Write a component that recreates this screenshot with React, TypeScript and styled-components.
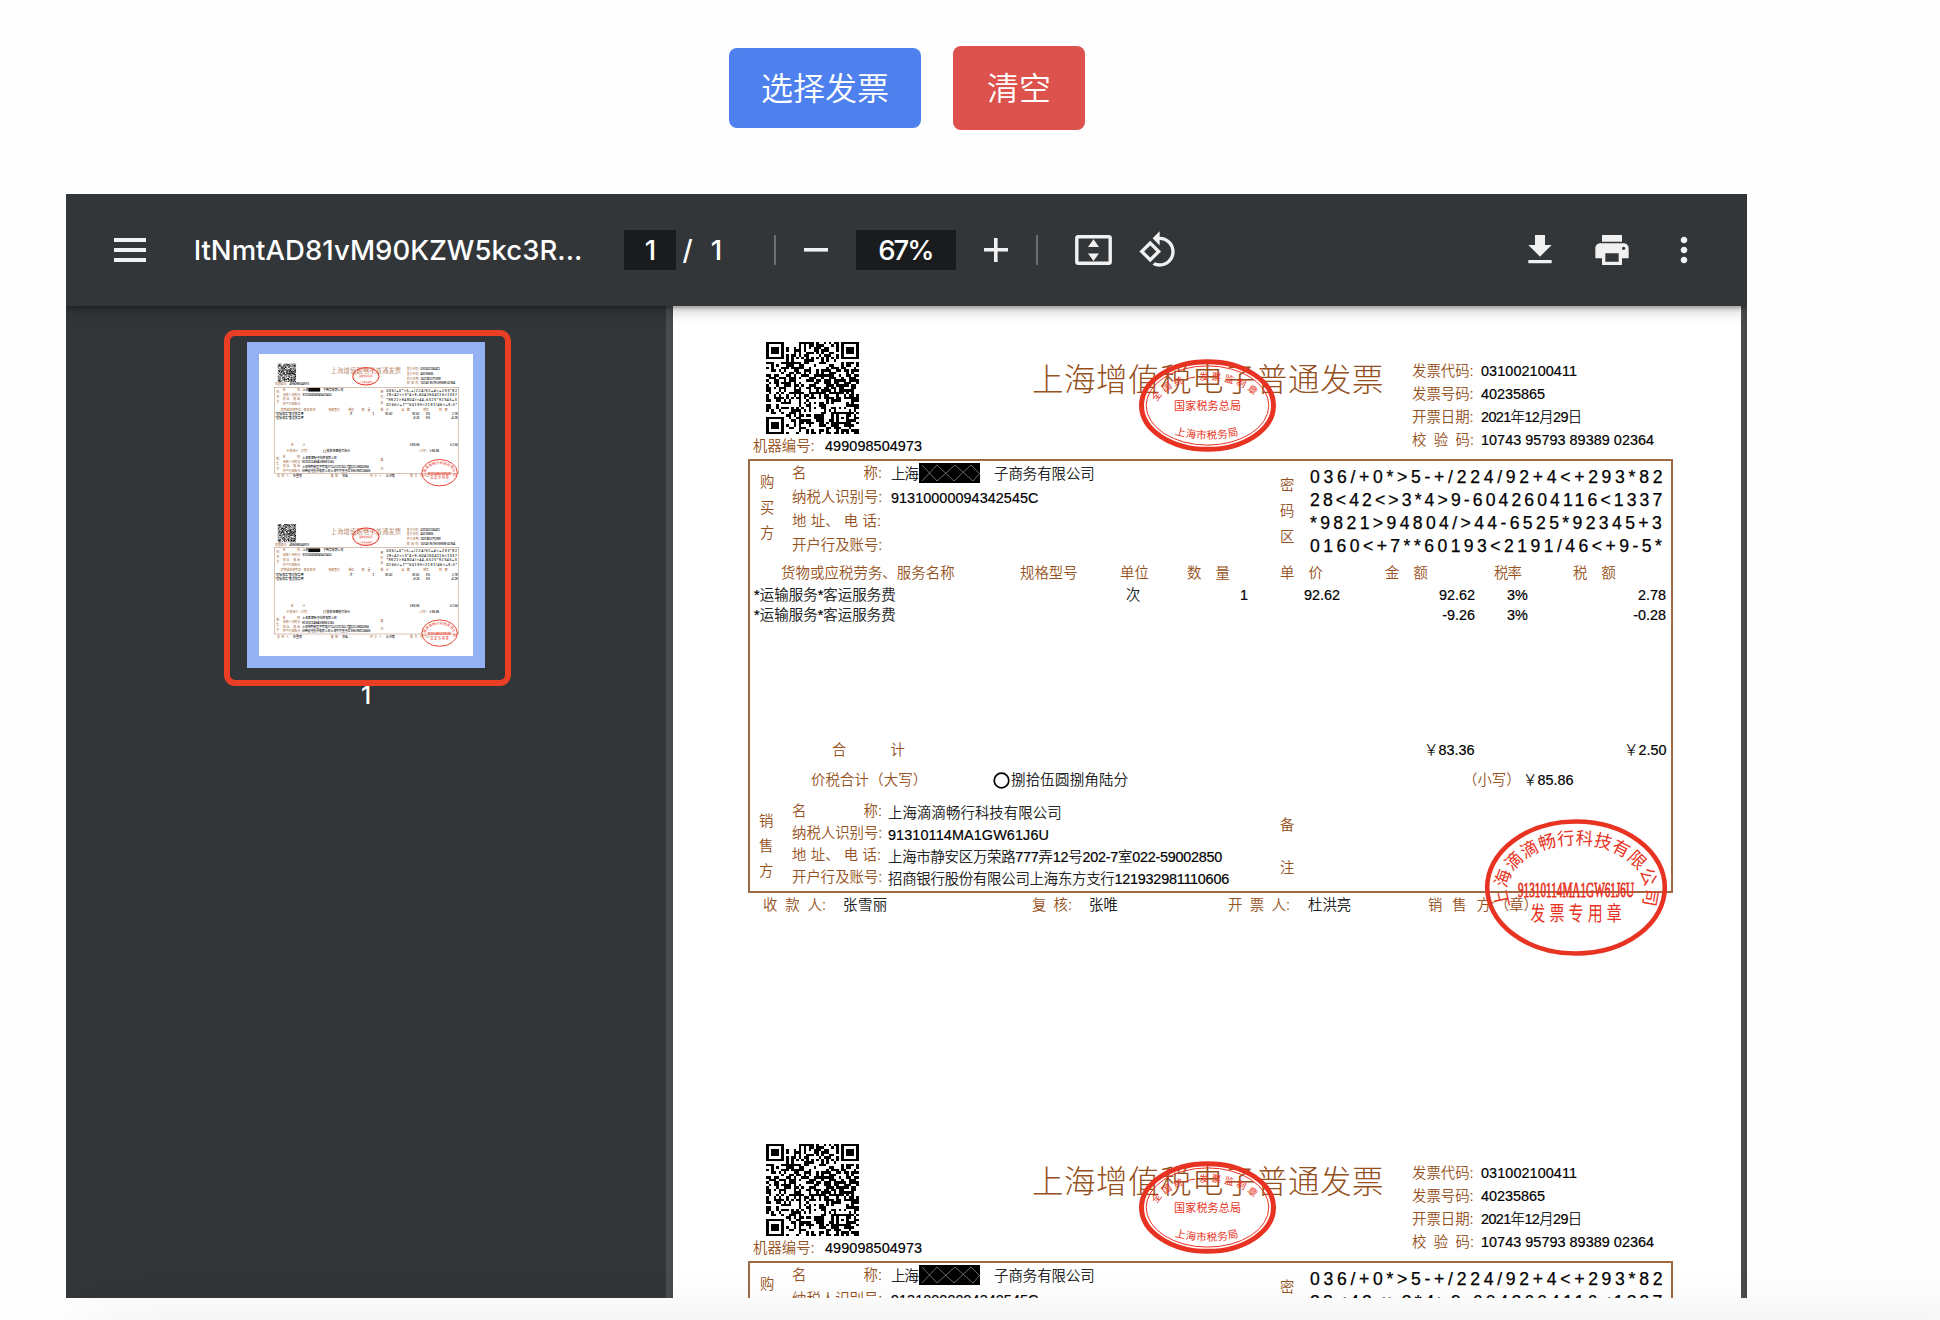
import React, { useLayoutEffect, useRef, useState } from 'react';
import styled, { createGlobalStyle } from 'styled-components';

const BROWN = '#955020';
const RED = '#e83323';

const GlobalStyle = createGlobalStyle`
  * { box-sizing: border-box; }
  html, body { margin: 0; background: #fefefe; overflow: hidden; }
  body {
    width: 1940px;
    height: 1320px;
    font-family: 'Liberation Sans', 'Noto Sans CJK SC', sans-serif;
  }
`;

/* ---------- page ---------- */

const Page = styled.div`
  position: relative;
  width: 1940px;
  height: 1320px;
  padding-left: 66px;
  overflow: hidden;
`;

const Actions = styled.div`
  display: flex;
  width: 1682px;
  height: 194px;
  padding-bottom: 18px;
  align-items: center;
  justify-content: center;
  gap: 32px;
`;

const Button = styled.button<{ $bg: string; $w: number; $h: number }>`
  width: ${(p) => p.$w}px;
  height: ${(p) => p.$h}px;
  padding: 0 0 5px;
  border: 0;
  border-radius: 8px;
  background: ${(p) => p.$bg};
  color: #fff;
  font: 350 32px/1 'Noto Sans CJK SC', sans-serif;
`;

const Viewer = styled.div`
  display: flex;
  flex-direction: column;
  width: 1681px;
  height: 1104px;
  overflow: hidden;
  background: #323639;
`;

const BottomGlow = styled.div`
  position: absolute;
  left: 90px;
  right: -60px;
  top: 1340px;
  height: 80px;
  box-shadow: 0 0 80px rgba(0, 0, 0, 0.11);
`;

/* ---------- toolbar ---------- */

const Toolbar = styled.div`
  position: relative;
  z-index: 2;
  display: flex;
  flex: 0 0 112px;
  align-items: center;
  padding-left: 48px;
  background: #323639;
  color: #fff;
  font: 500 27.5px/41px Inter, sans-serif;
  box-shadow: 0 2px 4px rgba(0, 0, 0, 0.3), 0 4px 12px rgba(0, 0, 0, 0.15),
    0 8px 16px rgba(0, 0, 0, 0.06);
`;

const Tool = styled.div<{ $ml: number; $w?: number }>`
  display: flex;
  flex: 0 0 ${(p) => (p.$w ? `${p.$w}px` : 'auto')};
  justify-content: center;
  margin-left: ${(p) => p.$ml}px;
`;

const Field = styled(Tool)`
  height: 40px;
  background: #1a1b1d;
`;

const Divider = styled.div<{ $ml: number }>`
  flex: 0 0 2px;
  height: 30px;
  margin-left: ${(p) => p.$ml}px;
  background: #6d7072;
`;

const Icon = styled.svg`
  display: block;
  fill: #f1f1f1;
`;

/* ---------- panes ---------- */

const Panes = styled.div`
  display: flex;
  flex: 1;
  min-height: 0;
`;

const Sidebar = styled.div`
  display: flex;
  flex: 0 0 600px;
  flex-direction: column;
  align-items: center;
  padding-top: 36px;
`;

const Splitter = styled.div<{ $w: number }>`
  flex: 0 0 ${(p) => p.$w}px;
  background: linear-gradient(90deg, #4c4f52, #45484b);
`;

const Thumb = styled.div`
  position: relative;
  width: 238px;
  height: 326px;
  border: 12px solid #93b1f3;
  background: #fff;
`;

const ThumbClip = styled.div`
  width: 214px;
  height: 302px;
  overflow: hidden;
`;

const ThumbScale = styled.div`
  width: 1068px;
  transform: scale(0.2);
  transform-origin: 0 0;
`;

const Marker = styled.div`
  position: absolute;
  left: -35px;
  top: -24px;
  width: 287px;
  height: 356px;
  border: 6px solid #ea3e25;
  border-radius: 11px;
`;

const ThumbLabel = styled.div`
  margin-top: 12px;
  color: #fff;
  font: 500 24.5px/30px Inter, sans-serif;
`;

const Document = styled.div`
  flex: 0 0 1068px;
  overflow: hidden;
  background: #fff;
`;

const Scrolled = styled.div`
  margin-top: -12px;
`;

/* ---------- invoice ---------- */

const Sheet = styled.div`
  position: relative;
  height: 802px;
  font-size: 14.4px;
  line-height: 20px;
  color: #000;
`;

const Head = styled.div`
  display: flex;
  height: 165px;
  padding-left: 80px;
`;

const QrColumn = styled.div`
  display: flex;
  flex-direction: column;
  flex: 0 0 279px;
  padding-top: 48px;
`;

const QrCode = styled.svg`
  display: block;
  width: 93px;
  height: 92px;
  margin-left: 13px;
  fill: #000;
`;

const Title = styled.div`
  flex: 0 0 380px;
  padding-top: 64px;
  color: ${BROWN};
  font: 300 31.5px/38px 'Noto Sans CJK SC', sans-serif;
`;

const Stack = styled.div<{ $w?: number; $pitch: number; $top: number }>`
  display: flex;
  flex-direction: column;
  flex: 0 0 ${(p) => (p.$w ? `${p.$w}px` : 'auto')};
  padding-top: ${(p) => p.$top}px;
  & > * {
    flex: none;
    height: ${(p) => p.$pitch}px;
    line-height: ${(p) => p.$pitch}px;
  }
`;

const Line = styled.div<{ $h?: number }>`
  display: flex;
  align-items: center;
  ${(p) => p.$h && `flex: none; height: ${p.$h}px; line-height: ${p.$h}px;`}
`;

const Frame = styled.div`
  display: flex;
  flex-direction: column;
  width: 925px;
  height: 434px;
  margin-left: 75px;
  border: 2px solid #a06a45;
`;

const Party = styled.div<{ $h: number }>`
  display: flex;
  flex: none;
  height: ${(p) => p.$h}px;
`;

const Spacer = styled.div<{ $h: number }>`
  flex: none;
  height: ${(p) => p.$h}px;
`;

const Cell = styled.div<{ $ml: number; $w: number; $brown?: boolean; $right?: boolean }>`
  display: flex;
  flex: none;
  width: ${(p) => p.$w}px;
  margin-left: ${(p) => p.$ml}px;
  justify-content: ${(p) => (p.$right ? 'flex-end' : 'space-between')};
  white-space: pre;
  color: ${(p) => (p.$brown ? BROWN : '#000')};
  font-weight: ${(p) => (p.$brown ? 350 : 300)};
  -webkit-text-stroke: ${(p) => (p.$brown ? '0' : '0.2px #000')};
`;

const Cipher = styled.div`
  font-size: 17.6px;
  -webkit-text-stroke: 0.25px #000;
`;

const Redaction = styled.svg`
  display: block;
  flex: 0 0 61px;
  height: 20px;
  margin: 0 14px 2px 0;
`;

const Seal = styled.svg<{ $x: number; $y: number }>`
  position: absolute;
  left: ${(p) => p.$x}px;
  top: ${(p) => p.$y}px;
  overflow: visible;
  fill: ${RED};
  font-family: 'Noto Sans CJK SC', sans-serif;
`;

const FitSpan = styled.span`
  display: inline-block;
  white-space: pre;
`;

/* Spreads the letters of a string so that it takes exactly the given width. */
function Fit({ w, children }: { w: number; children: string }) {
  const ref = useRef<HTMLSpanElement>(null);
  const [gap, setGap] = useState(0);
  useLayoutEffect(() => {
    const el = ref.current;
    if (!el) return;
    el.style.letterSpacing = '0px';
    setGap((w - el.offsetWidth) / Math.max(1, children.length - 1));
    el.style.letterSpacing = '';
  }, [w, children]);
  return (
    <FitSpan ref={ref} style={{ letterSpacing: `${gap}px`, marginRight: -gap }}>
      {children}
    </FitSpan>
  );
}

/* Brown form label; "|" marks the places where free space goes. */
function Label({ x = 0, w, children }: { x?: number; w: number; children: string }) {
  const parts = children.split('|');
  return (
    <Cell $ml={x} $w={w} $brown>
      {parts.length === 1 ? <Fit w={w}>{children}</Fit> : parts.map((p, i) => <span key={i}>{p}</span>)}
    </Cell>
  );
}

function Value({ x = 0, w, children }: { x?: number; w: number; children: string }) {
  return (
    <Cell $ml={x} $w={w}>
      <Fit w={w}>{children}</Fit>
    </Cell>
  );
}

const QR_SIZE = 37;

function finderBit(x: number, y: number) {
  const d = Math.max(Math.abs(x - 3), Math.abs(y - 3));
  return d === 3 || d <= 1;
}

function qrPath() {
  let seed = 40235865;
  let d = '';
  for (let y = 0; y < QR_SIZE; y++) {
    for (let x = 0; x < QR_SIZE; x++) {
      seed = (Math.imul(seed, 1103515245) + 12345) & 0x7fffffff;
      let on = ((seed >> 16) & 1) === 1;
      const far = QR_SIZE - 8;
      if (x < 8 && y < 8) on = x < 7 && y < 7 && finderBit(x, y);
      else if (x >= far && y < 8) on = x > far && y < 7 && finderBit(x - far - 1, y);
      else if (x < 8 && y >= far) on = x < 7 && y > far && finderBit(x, y - far - 1);
      else if (Math.abs(x - 30) <= 2 && Math.abs(y - 30) <= 2)
        on = Math.max(Math.abs(x - 30), Math.abs(y - 30)) !== 1;
      else if (x === 6 || y === 6) on = (x + y) % 2 === 0;
      if (on) d += `M${x} ${y}h1v1h-1z`;
    }
  }
  return d;
}

const QR_PATH = qrPath();

function TaxSeal({ id }: { id: string }) {
  return (
    <Seal $x={466} $y={65} width={137} height={93} viewBox="-68.5 -46.5 137 93">
      <ellipse rx={66} ry={43.8} fill="none" stroke={RED} strokeWidth={5} />
      <ellipse rx={61.3} ry={39.6} fill="none" stroke={RED} strokeWidth={1} />
      <path id={`${id}-top`} d="M-50.5 -3.5A52 29 0 0 1 50.5 -3.5" fill="none" />
      <path id={`${id}-low`} d="M-33 29Q0 38 33 29" fill="none" />
      <text fontSize={9.5} textLength={108}>
        <textPath href={`#${id}-top`} textLength={108}>
          全国统一发票监制章
        </textPath>
      </text>
      <text y={4.5} fontSize={11} textAnchor="middle" textLength={67}>
        国家税务总局
      </text>
      <text fontSize={10.5} textLength={65}>
        <textPath href={`#${id}-low`} textLength={65}>
          上海市税务局
        </textPath>
      </text>
    </Seal>
  );
}

function CompanySeal({ id }: { id: string }) {
  return (
    <Seal $x={812} $y={525} width={182} height={137} viewBox="-91 -68.5 182 137">
      <ellipse rx={88.8} ry={66} fill="none" stroke={RED} strokeWidth={4.6} />
      <path id={`${id}-ring`} d="M-65.2 18.5A69 46.5 0 1 1 65.2 18.5" fill="none" />
      <text fontSize={17.5}>
        <textPath href={`#${id}-ring`} textLength={213}>
          上海滴滴畅行科技有限公司
        </textPath>
      </text>
      <text
        y={9.5}
        fontSize={20}
        textAnchor="middle"
        textLength={116}
        lengthAdjust="spacingAndGlyphs"
        fontFamily="'Liberation Serif', serif"
        stroke={RED}
        strokeWidth={0.8}
      >
        91310114MA1GW61J6U
      </text>
      <g transform="translate(0 33) scale(0.75 1)">
        <text fontSize={20} textAnchor="middle" textLength={122}>
          发票专用章
        </text>
      </g>
    </Seal>
  );
}

const META: [string, string, number][] = [
  ['发票代码:', '031002100411', 96],
  ['发票号码:', '40235865', 64],
  ['开票日期:', '2021年12月29日', 101],
  ['校|验|码:', '10743 95793 89389 02364', 173],
];

const CIPHER = [
  '036/+0*>5-+/224/92+4<+293*82',
  '28<42<>3*4>9-6042604116<1337',
  '*9821>94804/>44-6525*92345+3',
  '0160<+7**60193<2191/46<+9-5*',
];

const SELLER: [string, number][] = [
  ['上海滴滴畅行科技有限公司', 174],
  ['91310114MA1GW61J6U', 161],
  ['上海市静安区万荣路777弄12号202-7室022-59002850', 334],
  ['招商银行股份有限公司上海东方支行121932981110606', 341],
];

function PartyLabels({ top, pitch }: { top: number; pitch: number }) {
  return (
    <Stack $w={90} $top={top} $pitch={pitch}>
      <Label w={90}>名|称:</Label>
      <Label w={90}>纳税人识别号:</Label>
      <Label w={89}>地|址、|电|话:</Label>
      <Label w={90}>开户行及账号:</Label>
    </Stack>
  );
}

function SideLabel({ text, x, w, top, pitch }: { text: string; x: number; w: number; top: number; pitch: number }) {
  return (
    <Stack $w={w} $top={top} $pitch={pitch}>
      {text.split('').map((c) => (
        <Cell key={c} $ml={x} $w={14} $brown>
          {c}
        </Cell>
      ))}
    </Stack>
  );
}

function Invoice({ id, crisp }: { id: string; crisp?: boolean }) {
  return (
    <Sheet>
      <Head>
        <QrColumn>
          <QrCode viewBox="0 0 37 37" preserveAspectRatio="none" shapeRendering={crisp ? 'crispEdges' : 'auto'}>
            <path d={QR_PATH} />
          </QrCode>
          <Line $h={25}>
            <Label w={62}>机器编号:</Label>
            <Value x={10} w={97}>499098504973</Value>
          </Line>
        </QrColumn>
        <Title>
          <Fit w={352}>上海增值税电子普通发票</Fit>
        </Title>
        <Stack $top={65.5} $pitch={23}>
          {META.map(([label, value, w]) => (
            <Line key={label}>
              <Label w={62}>{label}</Label>
              <Value x={7} w={w}>{value}</Value>
            </Line>
          ))}
        </Stack>
      </Head>

      <Frame>
        <Party $h={100}>
          <SideLabel text="购买方" x={10} w={42} top={9} pitch={25.5} />
          <PartyLabels top={0} pitch={24} />
          <Stack $w={388} $top={1} $pitch={24}>
            <Line>
              <Value x={9} w={28}>上海</Value>
              <Redaction viewBox="0 0 61 20">
                <path d="M0 0h61v20H0z" />
                <path
                  d="M3 18L18 2L35 18L52 2L61 11M3 2L18 18L36 2L54 18L61 10"
                  fill="none"
                  stroke="#6b6b6b"
                  strokeWidth={1}
                />
              </Redaction>
              <Value w={101}>子商务有限公司</Value>
            </Line>
            <Line>
              <Value x={9} w={147}>91310000094342545C</Value>
            </Line>
          </Stack>
          <SideLabel text="密码区" x={10} w={40} top={11} pitch={26} />
          <Stack $top={4.5} $pitch={23}>
            {CIPHER.map((row) => (
              <Cipher key={row}>
                <Fit w={352}>{row}</Fit>
              </Cipher>
            ))}
          </Stack>
        </Party>

        <Line $h={25}>
          <Label x={31} w={174}>货物或应税劳务、服务名称</Label>
          <Label x={65} w={58}>规格型号</Label>
          <Label x={42} w={29}>单位</Label>
          <Label x={38} w={43}>数|量</Label>
          <Label x={50} w={43}>单|价</Label>
          <Label x={62} w={43}>金|额</Label>
          <Label x={66} w={28}>税率</Label>
          <Label x={51} w={43}>税|额</Label>
        </Line>
        <Line $h={18}>
          <Value x={4} w={142}>*运输服务*客运服务费</Value>
          <Value x={230} w={15}>次</Value>
          <Cell $ml={87} $w={20} $right>1</Cell>
          <Cell $ml={32} $w={60} $right>92.62</Cell>
          <Cell $ml={75} $w={60} $right>92.62</Cell>
          <Cell $ml={32} $w={22}>3%</Cell>
          <Cell $ml={77} $w={60} $right>2.78</Cell>
        </Line>
        <Line $h={23}>
          <Value x={4} w={142}>*运输服务*客运服务费</Value>
          <Cell $ml={519} $w={60} $right>-9.26</Cell>
          <Cell $ml={32} $w={22}>3%</Cell>
          <Cell $ml={77} $w={60} $right>-0.28</Cell>
        </Line>
        <Spacer $h={112} />
        <Line $h={22}>
          <Label x={82} w={73}>合|计</Label>
          <Value x={519} w={50}>￥83.36</Value>
          <Value x={150} w={42}>￥2.50</Value>
        </Line>
        <Spacer $h={7} />
        <Line $h={24}>
          <Label x={61} w={116}>价税合计（大写）</Label>
          <Cell $ml={66} $w={17}>
            <svg width={17} height={17}>
              <circle cx={8.5} cy={8.5} r={7.3} fill="none" stroke="#000" strokeWidth={1.7} />
            </svg>
          </Cell>
          <Value x={1} w={117}>捌拾伍圆捌角陆分</Value>
          <Label x={335} w={58}>（小写）</Label>
          <Value x={2} w={50}>￥85.86</Value>
        </Line>
        <Spacer $h={4} />
        <Party $h={95}>
          <SideLabel text="销售方" x={9} w={42} top={13} pitch={25} />
          <PartyLabels top={3.5} pitch={22} />
          <Stack $w={398} $top={5.5} $pitch={22}>
            {SELLER.map(([text, w]) => (
              <Value key={text} x={6} w={w}>{text}</Value>
            ))}
          </Stack>
          <SideLabel text="备注" x={0} w={40} top={7.5} pitch={43} />
        </Party>
      </Frame>

      <Line $h={24}>
        <Label x={90} w={63}>收|款|人:</Label>
        <Value x={17} w={44}>张雪丽</Value>
        <Label x={145} w={40}>复|核:</Label>
        <Value x={17} w={29}>张唯</Value>
        <Label x={110} w={62}>开|票|人:</Label>
        <Value x={18} w={43}>杜洪亮</Value>
        <Label x={77} w={110}>销|售|方:（章）</Label>
      </Line>

      <TaxSeal id={`${id}-tax`} />
      <CompanySeal id={`${id}-company`} />
    </Sheet>
  );
}

const Material = ({ d }: { d: string }) => (
  <Icon width={40} height={40} viewBox="0 0 24 24">
    <path d={d} />
  </Icon>
);

export default function App() {
  return (
    <Page>
      <GlobalStyle />
      <Actions>
        <Button $bg="#4e81ee" $w={192} $h={80}>选择发票</Button>
        <Button $bg="#dd524d" $w={132} $h={84}>清空</Button>
      </Actions>
      <Viewer>
        <Toolbar>
          <Icon width={32} height={24}>
            <path d="M0 0h32v4H0zM0 10h32v4H0zM0 20h32v4H0z" />
          </Icon>
          <Tool $ml={48} $w={388}>
            <Fit w={388}>ltNmtAD81vM90KZW5kc3R...</Fit>
          </Tool>
          <Field $ml={42} $w={52}>1</Field>
          <Tool $ml={5} $w={12}>/</Tool>
          <Tool $ml={15} $w={16}>1</Tool>
          <Divider $ml={50} />
          <Tool $ml={28} $w={24}>
            <Icon width={24} height={24}>
              <path d="M0 10h24v3.6H0z" />
            </Icon>
          </Tool>
          <Field $ml={28} $w={100}>
            <Fit w={56}>67%</Fit>
          </Field>
          <Tool $ml={28} $w={24}>
            <Icon width={24} height={24}>
              <path d="M0 10h10V0h3.6v10H24v3.6H13.6V24H10V13.6H0z" />
            </Icon>
          </Tool>
          <Divider $ml={28} />
          <Tool $ml={37} $w={37}>
            <Icon width={37} height={30}>
              <rect x={1.8} y={1.8} width={33.4} height={26.4} rx={1.5} fill="none" stroke="#f1f1f1" strokeWidth={3.4} />
              <path d="M18.5 4.3l5.5 7.6H13zM18.5 26l5.5-7.6H13z" />
            </Icon>
          </Tool>
          <Tool $ml={26}>
            <Material d="M7.34 6.41L.86 12.9l6.49 6.48 6.49-6.48-6.5-6.49zM3.69 12.9l3.66-3.66L11 12.9l-3.66 3.66-3.65-3.66zm15.67-6.26C17.61 4.88 15.3 4 13 4V.76L8.76 5 13 9.24V6c1.79 0 3.58.68 4.95 2.05 2.73 2.73 2.73 7.17 0 9.9C16.58 19.32 14.79 20 13 20c-.97 0-1.94-.21-2.84-.61l-1.49 1.49C10.02 21.62 11.51 22 13 22c2.3 0 4.61-.88 6.36-2.64 3.52-3.51 3.52-9.21 0-12.72z" />
          </Tool>
          <Tool $ml={342}>
            <Material d="M19 9h-4V3H9v6H5l7 7 7-7zM5 18v2h14v-2H5z" />
          </Tool>
          <Tool $ml={32}>
            <Material d="M19 8H5c-1.66 0-3 1.34-3 3v6h4v4h12v-4h4v-6c0-1.66-1.34-3-3-3zm-3 11H8v-5h8v5zm3-7c-.55 0-1-.45-1-1s.45-1 1-1 1 .45 1 1-.45 1-1 1zm-1-9H6v4h12V3z" />
          </Tool>
          <Tool $ml={32}>
            <Material d="M12 8c1.1 0 2-.9 2-2s-.9-2-2-2-2 .9-2 2 .9 2 2 2zm0 2c-1.1 0-2 .9-2 2s.9 2 2 2 2-.9 2-2-.9-2-2-2zm0 6c-1.1 0-2 .9-2 2s.9 2 2 2 2-.9 2-2-.9-2-2-2z" />
          </Tool>
        </Toolbar>
        <Panes>
          <Sidebar>
            <Thumb>
              <ThumbClip>
                <ThumbScale>
                  <Invoice id="t1" />
                  <Invoice id="t2" />
                </ThumbScale>
              </ThumbClip>
              <Marker />
            </Thumb>
            <ThumbLabel>1</ThumbLabel>
          </Sidebar>
          <Splitter $w={7} />
          <Document>
            <Scrolled>
              <Invoice id="p1" crisp />
              <Invoice id="p2" crisp />
            </Scrolled>
          </Document>
          <Splitter $w={6} />
        </Panes>
      </Viewer>
      <BottomGlow />
    </Page>
  );
}
